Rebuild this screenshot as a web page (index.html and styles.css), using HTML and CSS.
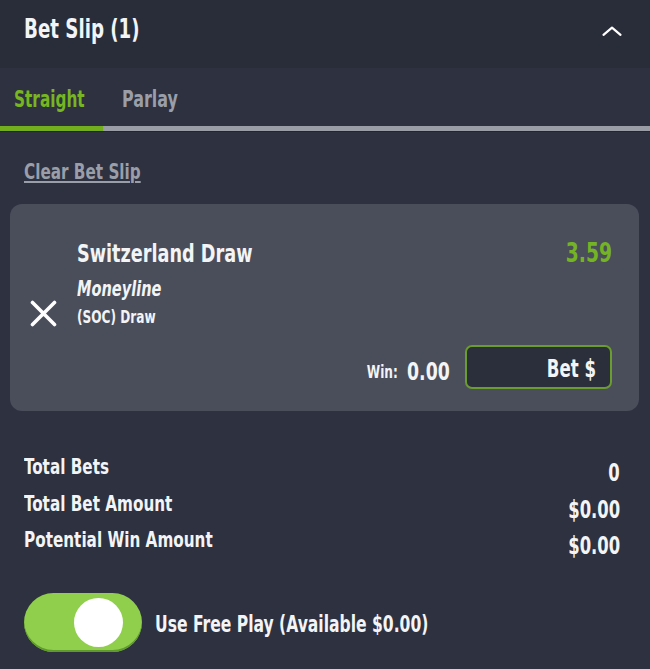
FILE: index.html
```html
<!DOCTYPE html>
<html lang="en">
<head>
    <meta charset="UTF-8">
    <meta name="viewport" content="width=device-width, initial-scale=1.0">
    <title>Bet Slip</title>
    <link rel="stylesheet" href="styles.css">
</head>
<body>
    <div class="slip">
        <header class="slip-head">
            <h1 class="slip-title">Bet Slip (1)</h1>
            <svg class="chevron" width="20" height="10" viewBox="0 0 20 10">
                <polyline points="1.5,8.8 10,1.6 18.5,8.8" fill="none" stroke="#fff" stroke-width="2.2" stroke-linecap="round" stroke-linejoin="round"/>
            </svg>
        </header>

        <nav class="tabs">
            <div class="tab active">Straight</div>
            <div class="tab">Parlay</div>
        </nav>
        <div class="tab-line"><div class="tab-line-fill"></div></div>

        <a class="clear" href="#">Clear Bet Slip</a>

        <div class="bet-card">
            <button class="remove" aria-label="Remove">
                <svg width="27" height="27" viewBox="0 0 27 27">
                    <path d="M2.5 2.5 L24.5 24.5 M24.5 2.5 L2.5 24.5" stroke="#fff" stroke-width="3.6" stroke-linecap="round"/>
                </svg>
            </button>
            <div class="bet-info">
                <div class="bet-top">
                    <div class="bet-name">Switzerland Draw</div>
                    <div class="bet-odds">3.59</div>
                </div>
                <div class="bet-type">Moneyline</div>
                <div class="bet-desc">(SOC) Draw</div>
                <div class="bet-foot">
                    <div class="win">
                        <span class="win-label">Win:</span>
                        <span class="win-val">0.00</span>
                    </div>
                    <button class="bet-btn"><span>Bet $</span></button>
                </div>
            </div>
        </div>

        <div class="totals">
            <div class="total-row">
                <span class="total-label">Total Bets</span>
                <span class="total-val">0</span>
            </div>
            <div class="total-row">
                <span class="total-label">Total Bet Amount</span>
                <span class="total-val">$0.00</span>
            </div>
            <div class="total-row">
                <span class="total-label">Potential Win Amount</span>
                <span class="total-val">$0.00</span>
            </div>
        </div>

        <div class="freeplay">
            <div class="toggle"><span class="knob"></span></div>
            <span class="freeplay-text">Use Free Play (Available $0.00)</span>
        </div>
    </div>
</body>
</html>
```

FILE: styles.css
```css
body {
    margin: 0;
    background: #2d3140;
    font-family: "DejaVu Sans Condensed", "DejaVu Sans", sans-serif;
    font-weight: 700;
    color: #f3f4f6;
}
.slip {
    width: 650px;
    min-height: 669px;
    background: #2d3140;
}

/* the app font is a narrow one, squeeze the condensed face to match */
.slip-title, .tab, .clear, .bet-name, .bet-type, .bet-desc,
.total-label, .freeplay-text {
    transform: scaleX(.77);
    transform-origin: left center;
}
.bet-odds, .win, .bet-btn span, .total-val {
    transform: scaleX(.77);
    transform-origin: right center;
}
.slip-title {
    transform: scaleX(.75);
}
.tab.active {
    transform: scaleX(.74);
}
.total-val {
    transform: scaleX(.73);
}

.slip-head {
    display: flex;
    justify-content: space-between;
    align-items: flex-start;
    height: 68px;
    box-sizing: border-box;
    padding: 14px 28px 0 24px;
    background: #292d39;
}
.slip-title {
    margin: 0;
    font-size: 27px;
    line-height: 30px;
    font-weight: 700;
}
.chevron {
    margin-top: 12px;
}
.tabs {
    display: flex;
    gap: 12px;
    padding: 18px 0 14px 14px;
}
.tab {
    font-size: 23px;
    line-height: 26px;
    color: #9a9ea9;
}
.tab.active {
    color: #77b522;
}
.tab-line {
    height: 5px;
    background: #9a9da6;
    border-bottom: 1px solid #23262f;
}
.tab-line-fill {
    width: 103px;
    height: 100%;
    background: #72ae1e;
}
.clear {
    display: inline-block;
    margin: 27px 0 0 24px;
    font-size: 22px;
    line-height: 26px;
    color: #9a9ea9;
    text-decoration: underline;
    text-decoration-thickness: 2px;
    text-underline-offset: 2px;
}
.bet-card {
    display: flex;
    gap: 20px;
    margin: 19px 11px 0 10px;
    padding: 34px 27px 22px 20px;
    background: #4a4e5b;
    border-radius: 12px;
}
.remove {
    align-self: center;
    padding: 0;
    border: none;
    background: none;
    width: 27px;
    height: 27px;
    cursor: pointer;
}
.remove svg {
    display: block;
}
.bet-info {
    flex: 1;
}
.bet-top {
    display: flex;
    justify-content: space-between;
    align-items: flex-start;
}
.bet-name {
    font-size: 25.5px;
    line-height: 30px;
}
.bet-odds {
    font-size: 27px;
    line-height: 30px;
    color: #74b324;
}
.bet-type {
    margin-top: 9px;
    font-size: 21px;
    line-height: 24px;
    font-style: italic;
}
.bet-desc {
    margin-top: 6px;
    font-size: 17.5px;
    line-height: 20px;
}
.bet-foot {
    display: flex;
    justify-content: flex-end;
    align-items: center;
    margin-top: 18px;
}
.win {
    display: flex;
    align-items: center;
    gap: 12px;
    margin: 10px 15px 0 0;
}
.win-label {
    font-size: 17.5px;
    line-height: 20px;
}
.win-val {
    font-size: 25px;
    line-height: 28px;
}
.bet-btn {
    width: 147px;
    height: 44px;
    padding: 3px 14px 0 0;
    text-align: right;
    font-family: inherit;
    font-weight: 700;
    font-size: 24px;
    line-height: 24px;
    color: #f3f4f6;
    background: #2b2f3c;
    border: 2px solid #6b9c2e;
    border-radius: 7px;
    cursor: pointer;
}
.bet-btn span {
    display: inline-block;
}
.totals {
    margin-top: 38px;
    padding: 0 30px 0 24px;
}
.total-row {
    display: flex;
    justify-content: space-between;
    align-items: flex-start;
    height: 36.5px;
}
.total-label {
    font-size: 22px;
    line-height: 36.5px;
}
.total-val {
    margin-top: 12px;
    font-size: 25px;
    line-height: 24px;
}
.freeplay {
    display: flex;
    align-items: center;
    gap: 13px;
    margin-top: 34px;
    padding-left: 24px;
}
.toggle {
    display: flex;
    align-items: center;
    width: 118px;
    height: 59px;
    box-sizing: border-box;
    padding-left: 50px;
    background: #8fcf4b;
    border-radius: 30px;
    box-shadow: inset 0 -2px 0 #5f9a2c;
}
.knob {
    width: 49px;
    height: 49px;
    border-radius: 50%;
    background: #fff;
}
.freeplay-text {
    margin-top: 3px;
    font-size: 22.5px;
    line-height: 26px;
}
```
